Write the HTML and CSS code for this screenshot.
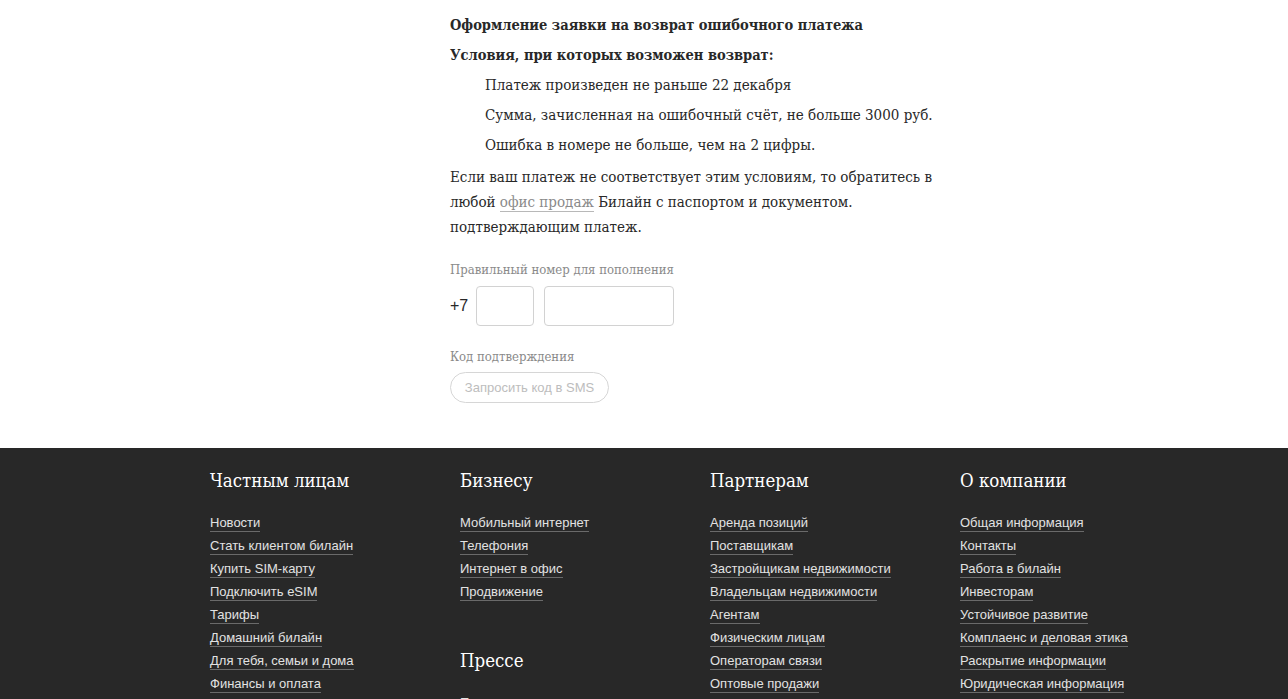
FILE: index.html
```html
<!DOCTYPE html>
<html lang="ru">
<head>
<meta charset="utf-8">
<title>Возврат ошибочного платежа</title>
<link rel="stylesheet" href="styles.css">
</head>
<body>
<main class="content">
  <h1 class="title">Оформление заявки на возврат ошибочного платежа</h1>
  <h2 class="subtitle">Условия, при которых возможен возврат:</h2>
  <ul class="conditions">
    <li>Платеж произведен не раньше 22 декабря</li>
    <li>Сумма, зачисленная на ошибочный счёт, не больше 3000 руб.</li>
    <li>Ошибка в номере не больше, чем на 2 цифры.</li>
  </ul>
  <p class="note">Если ваш платеж не соответствует этим условиям, то обратитесь в любой <a class="inline-link" href="#">офис продаж</a> Билайн с паспортом и документом. подтверждающим платеж.</p>
  <form class="form">
    <div class="field">
      <div class="label">Правильный номер для пополнения</div>
      <div class="phone">
        <span class="prefix">+7</span>
        <input class="input input-code" type="text">
        <input class="input input-number" type="text">
      </div>
    </div>
    <div class="field">
      <div class="label label-code">Код подтверждения</div>
      <button class="sms-btn" type="button">Запросить код в SMS</button>
    </div>
  </form>
</main>
<footer class="footer">
  <div class="footer-inner">
    <div class="col">
      <h3 class="col-title">Частным лицам</h3>
      <ul class="links">
        <li><a href="#">Новости</a></li>
        <li><a href="#">Стать клиентом билайн</a></li>
        <li><a href="#">Купить SIM-карту</a></li>
        <li><a href="#">Подключить eSIM</a></li>
        <li><a href="#">Тарифы</a></li>
        <li><a href="#">Домашний билайн</a></li>
        <li><a href="#">Для тебя, семьи и дома</a></li>
        <li><a href="#">Финансы и оплата</a></li>
      </ul>
    </div>
    <div class="col">
      <h3 class="col-title">Бизнесу</h3>
      <ul class="links">
        <li><a href="#">Мобильный интернет</a></li>
        <li><a href="#">Телефония</a></li>
        <li><a href="#">Интернет в офис</a></li>
        <li><a href="#">Продвижение</a></li>
      </ul>
      <h3 class="col-title col-title-2">Прессе</h3>
      <ul class="links">
        <li><a href="#">Пресс-центр</a></li>
      </ul>
    </div>
    <div class="col">
      <h3 class="col-title">Партнерам</h3>
      <ul class="links">
        <li><a href="#">Аренда позиций</a></li>
        <li><a href="#">Поставщикам</a></li>
        <li><a href="#">Застройщикам недвижимости</a></li>
        <li><a href="#">Владельцам недвижимости</a></li>
        <li><a href="#">Агентам</a></li>
        <li><a href="#">Физическим лицам</a></li>
        <li><a href="#">Операторам связи</a></li>
        <li><a href="#">Оптовые продажи</a></li>
      </ul>
    </div>
    <div class="col">
      <h3 class="col-title">О компании</h3>
      <ul class="links">
        <li><a href="#">Общая информация</a></li>
        <li><a href="#">Контакты</a></li>
        <li><a href="#">Работа в билайн</a></li>
        <li><a href="#">Инвесторам</a></li>
        <li><a href="#">Устойчивое развитие</a></li>
        <li><a href="#">Комплаенс и деловая этика</a></li>
        <li><a href="#">Раскрытие информации</a></li>
        <li><a href="#">Юридическая информация</a></li>
      </ul>
    </div>
  </div>
</footer>
</body>
</html>
```
FILE: styles.css
```css
* { box-sizing: border-box; }
html, body { margin: 0; padding: 0; }
body {
  background: #fff;
  color: #282828;
  font-family: "DejaVu Serif", "Liberation Serif", serif;
  font-stretch: condensed;
}
.content {
  width: 490px;
  margin-left: 450px;
  padding-top: 10px;
  padding-bottom: 23px;
}
.title, .subtitle {
  margin: 0;
  font-size: 14.5px;
  font-weight: bold;
  line-height: 30px;
  height: 30px;
}
.conditions {
  list-style: none;
  margin: 0;
  padding: 0 0 0 35px;
}
.conditions li {
  font-size: 15px;
  line-height: 30px;
}
.note {
  margin: 5px 0 0;
  font-size: 15px;
  line-height: 25px;
}
.inline-link {
  color: #8a8a8a;
  text-decoration: none;
  border-bottom: 1px solid #b8b8b8;
}
.form { margin-top: 21px; }
.field { margin-bottom: 22px; }
.label {
  font-size: 13px;
  color: #8a8a8a;
  line-height: 18px;
  margin-bottom: 7px;
}
.label-code { margin-bottom: 6px; }
.phone {
  display: flex;
  align-items: center;
  gap: 10px;
}
.prefix {
  font-family: "Liberation Sans", Arial, sans-serif;
  font-size: 16px;
  color: #282828;
  width: 16px;
}
.input {
  height: 40px;
  border: 1px solid #d2d2d2;
  border-radius: 4px;
  background: #fff;
  padding: 0 8px;
  outline: none;
}
.input-code { width: 58px; }
.input-number { width: 130px; }
.sms-btn {
  display: block;
  width: 159px;
  height: 31px;
  border: 1px solid #d6d6d6;
  border-radius: 16px;
  background: #fff;
  color: #bdbdbd;
  font-family: "Liberation Sans", Arial, sans-serif;
  font-size: 13px;
  padding: 0;
}
.footer {
  background: #282828;
  color: #fff;
  padding: 20px 0 0;
  height: 260px;
  overflow: hidden;
}
.footer-inner {
  margin-left: 210px;
  display: grid;
  grid-template-columns: repeat(4, 250px);
}
.col-title {
  margin: 0;
  font-weight: normal;
  font-size: 18.5px;
  line-height: 26px;
  color: #fff;
  margin-bottom: 20px;
}
.col-title-2 { margin-top: 42px; }
.links {
  list-style: none;
  margin: 0;
  padding: 0;
}
.links li {
  height: 23px;
  line-height: 16px;
}
.links a {
  font-family: "Liberation Sans", Arial, sans-serif;
  font-size: 13px;
  color: #e2e2e2;
  text-decoration: none;
  border-bottom: 1px solid #6a6a6a;
  padding-bottom: 1px;
}
```
